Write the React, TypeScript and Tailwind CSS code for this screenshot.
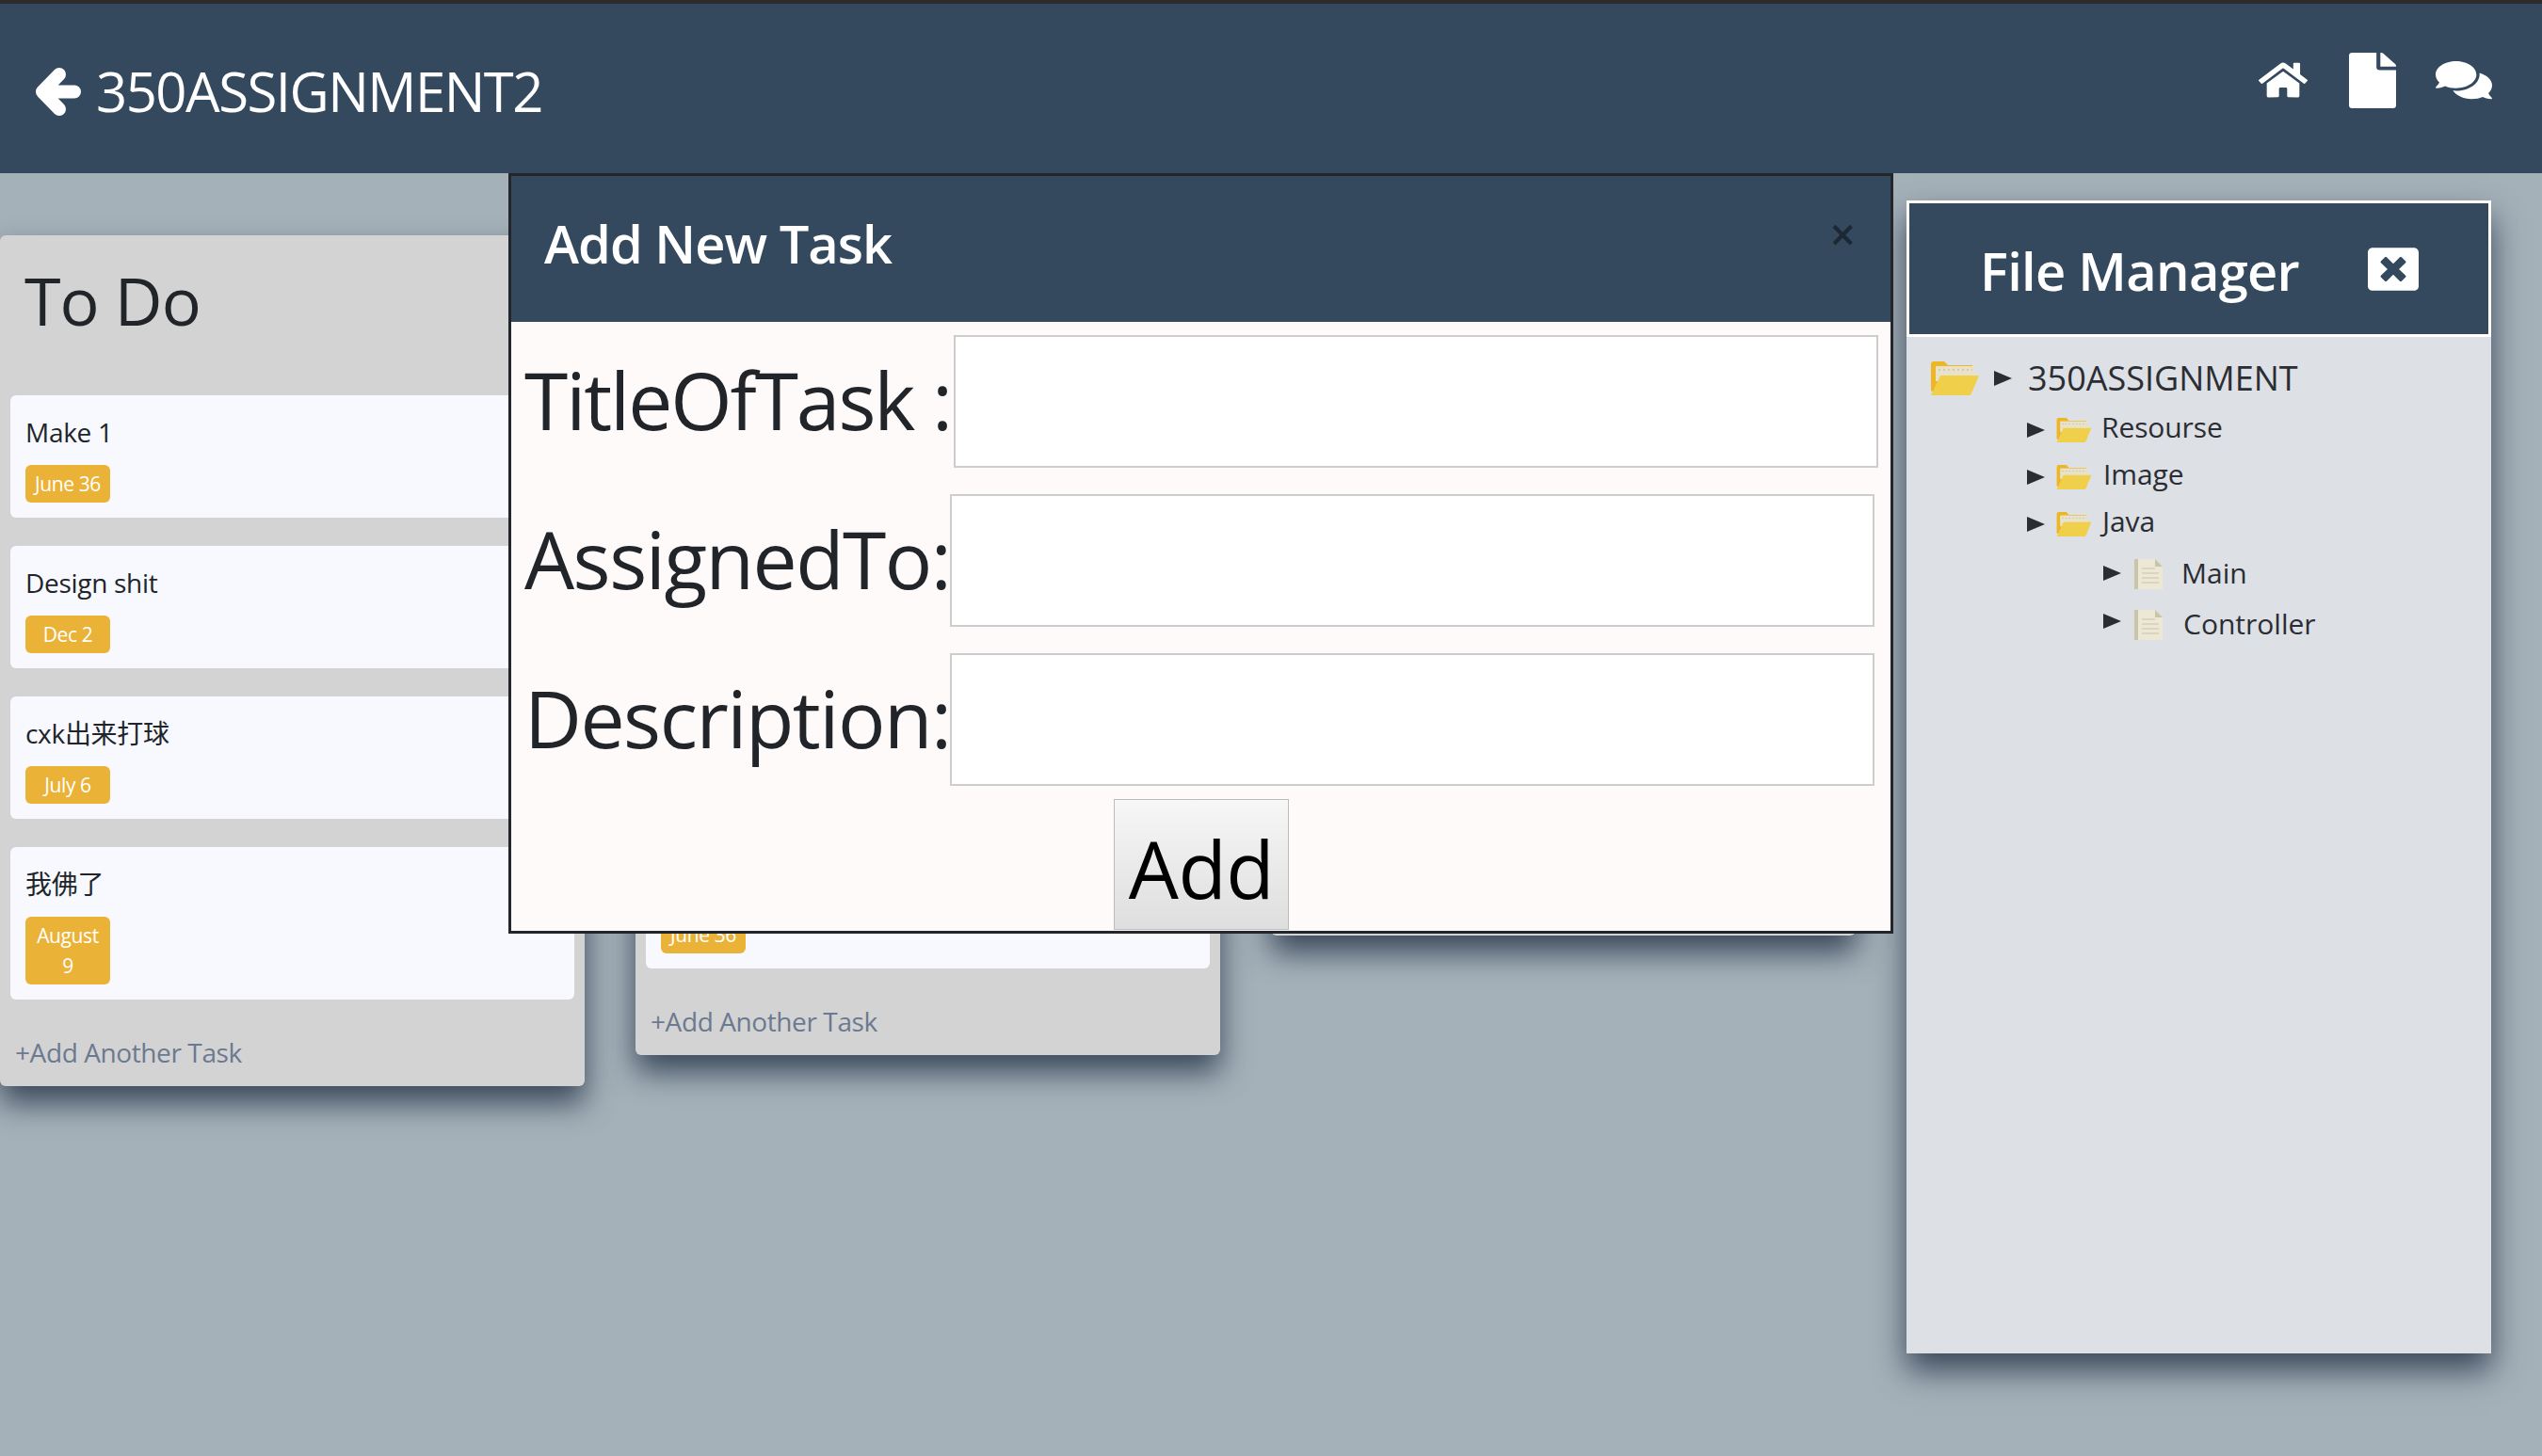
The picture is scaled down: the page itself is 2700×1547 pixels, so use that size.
import { FaComments, FaFile, FaHome, FaWindowClose } from 'react-icons/fa';

type CardProps = {
  title?: string;
  badge?: string;
};

type ColumnProps = {
  title?: string;
  cards: CardProps[];
};

const columns: ColumnProps[] = [
  {
    title: 'To Do',
    cards: [
      { title: 'Make 1', badge: 'June 36' },
      { title: 'Design shit', badge: 'Dec 2' },
      { title: 'cxk出来打球', badge: 'July 6' },
      { title: '我佛了', badge: 'August 9' },
    ],
  },
  {
    cards: [{ badge: 'June 36' }, { badge: 'June 36' }, { badge: 'June 36' }, { badge: 'June 36' }],
  },
  {
    cards: [{ badge: 'June 36' }, { badge: 'June 36' }, { badge: 'August 9' }],
  },
];

const Card = ({ title, badge }: CardProps) => (
  <div className="mx-[11px] rounded-[6px] bg-[#f8f9fe] px-[16px] pt-[18px] pb-[16px]">
    <p className="h-[42px] text-[28px] leading-[42px] tracking-[-0.3px] text-[#212529]">{title}</p>
    <span className="mt-[14px] block w-[90px] rounded-[6px] bg-[#ebb238] px-[8px] py-[4px] text-center text-[21px] leading-[32px] tracking-[-0.4px] text-white">
      {badge}
    </span>
  </div>
);

const Column = ({ title, cards }: ColumnProps) => (
  <section className="w-[621px] shrink-0 rounded-[6px] bg-[#d3d3d3] shadow-[0_18px_32px_rgba(45,60,80,0.9)] even:-mt-[1px]">
    <h2 className="h-[170px] pt-[24px] pl-[26px] text-[70px] leading-[90px] font-medium tracking-[-1px] text-[#212529]">{title}</h2>
    <div className="flex flex-col gap-[30px]">
      {cards.map((card, i) => (
        <Card key={i} {...card} />
      ))}
    </div>
    <div className="h-[92px] pt-[36px] pl-[16px] text-[28px] leading-[40px] tracking-[-0.4px] text-[#6b7a90]">+Add Another Task</div>
  </section>
);

const Triangle = ({ className = '' }: { className?: string }) => (
  <svg viewBox="0 0 19 16" className={`h-[16px] w-[19px] shrink-0 ${className}`}>
    <polygon points="0,0 19,8 0,16" fill="#2b2d33" />
  </svg>
);

const FolderIcon = ({ className }: { className: string }) => (
  <svg viewBox="0 0 51 36" className={className}>
    <path d="M0 3a3 3 0 0 1 3-3h11l4 4h26v28H2a2 2 0 0 1-2-2z" fill="#ecb625" />
    <rect x="5" y="5" width="41" height="16" fill="#e9e2cb" />
    <path d="M8 9h36" stroke="#bdb59c" strokeWidth="1" strokeDasharray="2 3" />
    <path d="M10 15h41l-8 19a3 3 0 0 1-2 2H0z" fill="#f0cf4a" />
  </svg>
);

const FileIcon = () => (
  <svg viewBox="0 0 30 32" className="h-[32px] w-[30px] shrink-0">
    <path d="M0 0h22l8 8v24H0z" fill="#ece8d5" />
    <path d="M0 0h4v32H0z" fill="#c9c5a9" />
    <path d="M22 0l8 8h-8z" fill="#c9c5a9" />
    <path d="M8 10h14M8 15h18M8 20h18M8 25h18" stroke="#d3cfb4" strokeWidth="1.5" />
  </svg>
);

const FolderRow = ({ name, gap, mt }: { name: string; gap: string; mt: string }) => (
  <div className={`ml-[128px] flex h-[26px] items-center ${mt}`}>
    <Triangle />
    <FolderIcon className="ml-[12px] h-[26px] w-[38px] shrink-0" />
    <span className={`${gap} -mt-[6px] text-[30px] leading-[26px] tracking-[-0.1px] text-[#2b2d33]`}>{name}</span>
  </div>
);

const FileRow = ({ name, gap, mt, triangle }: { name: string; gap: string; mt: string; triangle: string }) => (
  <div className={`ml-[209px] flex h-[32px] items-center ${mt}`}>
    <Triangle className={triangle} />
    <span className="ml-[14px]">
      <FileIcon />
    </span>
    <span className={`${gap} -mt-[3px] text-[30px] leading-[32px] tracking-[0px] text-[#2b2d33]`}>{name}</span>
  </div>
);

const FileManager = () => (
  <aside className="mt-[29px] ml-[54px] flex h-[1225px] w-[621px] shrink-0 flex-col bg-[#dde0e5] shadow-[0_18px_32px_rgba(45,60,80,0.9)]">
    <div className="flex h-[145px] items-center border-[3px] border-white bg-[#34495e] pl-[75px]">
      <h2 className="mt-[2px] text-[56px] leading-[72px] font-semibold tracking-[-0.7px] text-white">File Manager</h2>
      <FaWindowClose className="mr-[74px] ml-auto h-[52px] w-[54px] text-white" preserveAspectRatio="none" />
    </div>
    <div className="mt-[26px] ml-[26px] flex h-[36px] items-center">
      <FolderIcon className="h-[36px] w-[51px] shrink-0" />
      <span className="ml-[16px]">
        <Triangle />
      </span>
      <span className="ml-[17px] text-[36px] leading-[36px] tracking-[0px] text-[#2b2d33]">350ASSIGNMENT</span>
    </div>
    <FolderRow name="Resourse" gap="ml-[10px]" mt="mt-[24px]" />
    <FolderRow name="Image" gap="ml-[12px]" mt="mt-[24px]" />
    <FolderRow name="Java" gap="ml-[11px]" mt="mt-[24px]" />
    <FileRow name="Main" gap="ml-[20px]" mt="mt-[24px]" triangle="-mt-[3px]" />
    <FileRow name="Controller" gap="ml-[22px]" mt="mt-[22px]" triangle="-mt-[8px]" />
  </aside>
);

const FormRow = ({ label, labelClass }: { label: string; labelClass: string }) => (
  <div className="flex items-center">
    <label className={`${labelClass} -mt-[3px] shrink-0 whitespace-nowrap text-[84px] leading-[110px] text-[#212529]`}>{label}</label>
    <input className="h-[141px] w-[982px] shrink-0 border-2 border-[#cdcdcd] bg-white" />
  </div>
);

const AddTaskModal = () => (
  <div className="absolute top-[184px] left-[540px] h-[808px] w-[1471px] border-[3px] border-[#23272b] bg-[#fffafa]">
    <div className="flex h-[155px] items-start justify-between bg-[#34495e] pr-[37px] pl-[35px]">
      <h2 className="mt-[34px] text-[56px] leading-[74px] font-semibold tracking-[-1px] text-white">Add New Task</h2>
      <span className="mt-[38px] text-[48px] leading-[48px] font-semibold text-[#1c2833]">×</span>
    </div>
    <div className="flex flex-col gap-[28px] pt-[14px] pl-[14px]">
      <FormRow label="TitleOfTask :" labelClass="w-[456px] tracking-[-2.1px]" />
      <FormRow label="AssignedTo:" labelClass="w-[452px] tracking-[-1.5px]" />
      <FormRow label="Description:" labelClass="w-[452px] tracking-[-1.5px]" />
    </div>
    <button className="mt-[14px] ml-[640px] h-[139px] w-[186px] border border-[#bcbcbc] bg-gradient-to-b from-[#f7f7f7] to-[#dedede] pt-[8px] text-[84px] leading-[110px] tracking-[-0.5px] text-black">
      Add
    </button>
  </div>
);

const App = () => {
  return (
    <div className="relative flex h-[1547px] w-[2700px] flex-col overflow-hidden bg-[#a5b1b9] font-['Open_Sans','Noto_Sans_CJK_SC',sans-serif]">
      <div className="h-[4px] bg-[#2c2c2c]" />
      <header className="flex h-[180px] items-center justify-between bg-[#34495e] pr-[53px] pl-[38px]">
        <div className="flex items-center text-white">
          <svg viewBox="0 0 48 51" className="mt-[6px] h-[51px] w-[48px]">
            <path d="M25 7 L7 25.5 L25 44 M9 25.5 H41" fill="none" stroke="currentColor" strokeWidth="14" strokeLinecap="round" strokeLinejoin="round" />
          </svg>
          <h1 className="mt-[6px] ml-[16px] text-[58px] leading-[76px] tracking-[-1.5px]">350ASSIGNMENT2</h1>
        </div>
        <div className="mb-[18px] flex items-center text-white">
          <FaHome className="h-[42px] w-[52px]" preserveAspectRatio="none" />
          <FaFile className="ml-[44px] h-[59px] w-[50px]" preserveAspectRatio="none" />
          <FaComments className="ml-[42px] h-[46px] w-[60px]" preserveAspectRatio="none" />
        </div>
      </header>
      <main className="flex flex-1 items-start">
        <div className="mt-[66px] flex items-start gap-[54px]">
          {columns.map((col, i) => (
            <Column key={i} {...col} />
          ))}
        </div>
        <FileManager />
      </main>
      <AddTaskModal />
    </div>
  );
};

export default App;
